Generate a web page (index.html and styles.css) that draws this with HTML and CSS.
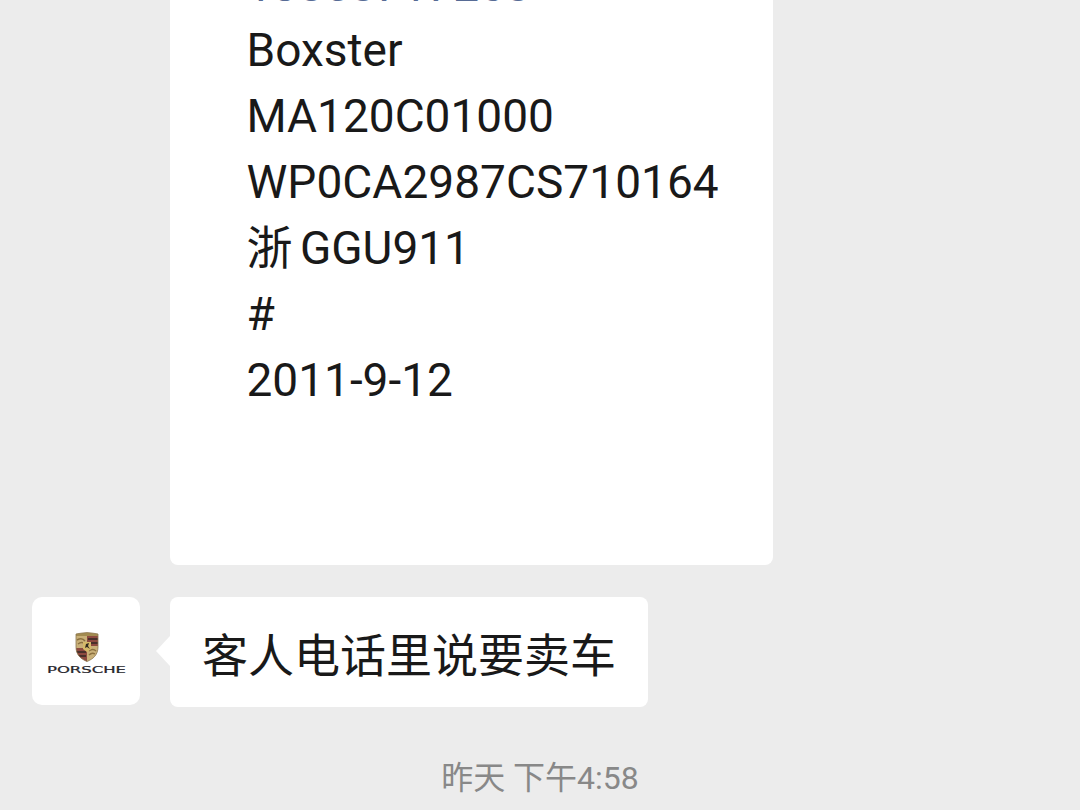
FILE: index.html
```html
<!DOCTYPE html>
<html lang="zh-CN">
<head>
    <meta charset="UTF-8">
    <meta name="viewport" content="width=device-width, initial-scale=1.0">
    <title>Chat</title>
    <link rel="stylesheet" href="styles.css">
</head>
<body>
    <main class="chat">
        <div class="message card">
            <p class="phone">13858717268</p>
            <p>Boxster</p>
            <p>MA120C01000</p>
            <p class="vin">WP0CA2987CS710164</p>
            <p class="plate">浙 GGU911</p>
            <p>#</p>
            <p>2011-9-12</p>
        </div>

        <div class="row">
            <div class="avatar">
                <svg class="crest" viewBox="0 0 24 30">
                    <defs>
                        <clipPath id="shield">
                            <path d="M1 2Q6 1 12 .5Q18 1 23 2V15C23 23 18 27 12 29.5C6 27 1 23 1 15Z"/>
                        </clipPath>
                    </defs>
                    <g clip-path="url(#shield)">
                        <rect width="24" height="30" fill="#c9b078"/>
                        <path d="M12 4H24V14H12Z" fill="#8d4a40"/>
                        <path d="M0 16H12V30H0Z" fill="#8d4a40"/>
                        <path d="M13 7H23M13 11H23M1 20H11M2 24H11" stroke="#49302b" stroke-width="1.8"/>
                        <path d="M2 8Q7 5 10 9M3 12Q7 9 10 12M14 19Q18 16 21 19M14 23Q17 20 20 22" fill="none" stroke="#8b7040" stroke-width="1.5"/>
                        <path d="M0 1H24V4H0Z" fill="#a28b50"/>
                        <path d="M8 10H16V17L12 20L8 17Z" fill="#d5b969"/>
                        <path d="M10 16L11 12L14 11L13 14L15 17L12 15Z" fill="#30291f"/>
                    </g>
                    <path d="M1 2Q6 1 12 .5Q18 1 23 2V15C23 23 18 27 12 29.5C6 27 1 23 1 15Z" fill="none" stroke="#8c7650" stroke-width=".8"/>
                </svg>
                <svg class="wordmark" viewBox="0 0 80 9">
                    <text x="1" y="7" textLength="79" lengthAdjust="spacingAndGlyphs">PORSCHE</text>
                </svg>
            </div>
            <div class="message bubble">客人电话里说要卖车</div>
        </div>

        <time class="time">昨天 下午4:58</time>
    </main>
</body>
</html>
```

FILE: styles.css
```css
* {
    margin: 0;
    padding: 0;
    box-sizing: border-box;
}

body {
    height: 100vh;
    overflow: hidden;
    background: #ececec;
    color: #191919;
    font-family: Roboto, "Noto Sans CJK SC", sans-serif;
}

.chat {
    display: flex;
    flex-direction: column;
    height: 810px;
    overflow: hidden;
}

.message {
    background: #fff;
    border-radius: 8px;
    font-size: 46px;
    line-height: 66px;
    white-space: nowrap;
}

/* Vehicle details */
.card {
    flex-shrink: 0;
    width: 603px;
    height: 614px;
    margin-top: -49px;
    margin-left: 170px;
    padding-left: 76.5px;
}

.card p {
    height: 66px;
}

.card .phone {
    color: #576b95;
    line-height: 68px;
}

.card .vin {
    letter-spacing: 0.05px;
}

.card .plate {
    word-spacing: -4px;
}

.row {
    display: flex;
    gap: 30px;
    margin-top: 32px;
    padding-left: 32px;
}

/* Avatar */
.avatar {
    display: flex;
    flex-direction: column;
    align-items: center;
    width: 108px;
    height: 108px;
    padding-top: 35px;
    border-radius: 10px;
    background: #fff;
}

.crest {
    width: 24px;
    height: 30px;
    margin-left: 2px;
}

.wordmark {
    width: 80px;
    height: 9px;
    margin-top: 4px;
}

.wordmark text {
    font: 8px "DejaVu Sans", sans-serif;
    fill: #25242a;
    stroke: #25242a;
    stroke-width: .2;
}

.bubble {
    position: relative;
    width: 478px;
    height: 110px;
    padding: 26px 32px 18px;
}

/* Bubble arrow */
.bubble::before {
    content: "";
    position: absolute;
    top: 39px;
    left: -14px;
    border: 15px solid transparent;
    border-left: 0;
    border-right: 14px solid #fff;
}

.time {
    margin-top: 50px;
    color: #888;
    font-size: 32px;
    line-height: 43px;
    text-align: center;
}
```
